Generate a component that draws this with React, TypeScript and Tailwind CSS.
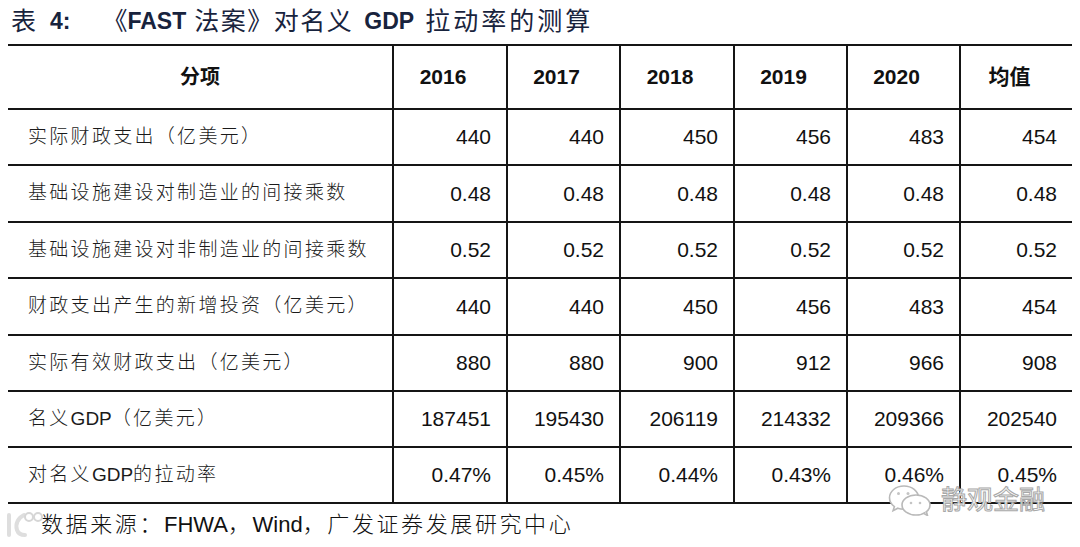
import React from 'react';

const LATIN = '"Liberation Sans", Arial, sans-serif';
const CJK = '"Liberation Sans", "Noto Sans CJK SC", sans-serif';

const COLS = ['2016', '2017', '2018', '2019', '2020', '均值'];

const ROWS: { label: string; values: string[]; h: string }[] = [
  { label: '实际财政支出（亿美元）', values: ['440', '440', '450', '456', '483', '454'], h: 'h-[56px]' },
  { label: '基础设施建设对制造业的间接乘数', values: ['0.48', '0.48', '0.48', '0.48', '0.48', '0.48'], h: 'h-[57px]' },
  { label: '基础设施建设对非制造业的间接乘数', values: ['0.52', '0.52', '0.52', '0.52', '0.52', '0.52'], h: 'h-[56px]' },
  { label: '财政支出产生的新增投资（亿美元）', values: ['440', '440', '450', '456', '483', '454'], h: 'h-[57px]' },
  { label: '实际有效财政支出（亿美元）', values: ['880', '880', '900', '912', '966', '908'], h: 'h-[56px]' },
  { label: '名义GDP（亿美元）', values: ['187451', '195430', '206119', '214332', '209366', '202540'], h: 'h-[56px]' },
  { label: '对名义GDP的拉动率', values: ['0.47%', '0.45%', '0.44%', '0.43%', '0.46%', '0.45%'], h: 'h-[56px]' },
];

// splits a label so only the chinese parts get the wide spacing
function Mixed({ text, cjk }: { text: string; cjk: string }) {
  const parts = text.split(/([\u0000-\u00ff]+)/).filter(Boolean);
  return (
    <>
      {parts.map((p, i) =>
        /^[\u0000-\u00ff]+$/.test(p) ? (
          <span key={i}>{p}</span>
        ) : (
          <span key={i} className={cjk}>
            {p}
          </span>
        )
      )}
    </>
  );
}

const WeChatMark = () => (
  <svg width="46" height="32" viewBox="0 0 46 32" fill="none">
    <path
      d="M17 2C8.7 2 2.5 7.4 2.5 13.8c0 3.6 1.9 6.7 4.9 8.8l-1.3 4 4.7-2.4c1.9.6 4 .9 6.2.9"
      stroke="#b9b9b9"
      strokeWidth="1.6"
      fill="#fff"
    />
    <path d="M17 2c8 0 14.3 5.1 14.5 11.5" stroke="#b9b9b9" strokeWidth="1.6" />
    <ellipse cx="29" cy="21" rx="14" ry="10" fill="#fff" stroke="#b9b9b9" strokeWidth="1.6" />
    <path d="M37 29.5l3.5 2-1-3.6" stroke="#b9b9b9" strokeWidth="1.6" fill="#fff" />
    <circle cx="11.5" cy="9.5" r="1.5" fill="#c4c4c4" />
    <circle cx="21" cy="9.5" r="1.5" fill="#c4c4c4" />
    <circle cx="24" cy="19" r="1.3" fill="#c4c4c4" />
    <circle cx="33" cy="19" r="1.3" fill="#c4c4c4" />
  </svg>
);

const CornerMark = () => (
  <svg width="40" height="30" viewBox="0 0 40 30" fill="none">
    <path d="M4 6v20" stroke="#dedede" strokeWidth="4" strokeLinecap="round" />
    <path d="M19 6c-6 3-9 9-7 15 1 3 4 5 8 5" stroke="#dedede" strokeWidth="4" strokeLinecap="round" />
    <circle cx="24" cy="8" r="4" stroke="#d6d6d6" strokeWidth="2" />
    <circle cx="33" cy="8" r="4" stroke="#d6d6d6" strokeWidth="2" />
  </svg>
);

export default function App() {
  return (
    <div className="relative w-[1080px] h-[547px] overflow-hidden bg-white text-[#111]">
      {/* title */}
      <div
        className="h-[44px] pl-[11px] pt-[5px] flex items-start text-[#18233d] leading-[32px] whitespace-nowrap"
        style={{ fontFamily: CJK }}
      >
        <span className="text-[25px]">表</span>
        <span className="ml-[14px] text-[23px] font-bold" style={{ fontFamily: LATIN }}>4:</span>
        <span className="ml-[32px] text-[25px]">《</span>
        <span className="text-[23px] font-bold" style={{ fontFamily: LATIN }}>FAST</span>
        <span className="ml-[8px] text-[25px] tracking-[1.5px]">法案》对名义</span>
        <span className="ml-[11px] text-[23px] font-bold" style={{ fontFamily: LATIN }}>GDP</span>
        <span className="ml-[11px] text-[25px] tracking-[3px]">拉动率的测算</span>
      </div>

      {/* table */}
      <div
        className="ml-[8px] w-[1064px] grid grid-cols-[384px_114px_113px_114px_113px_113px_113px] border-b-2 border-[#151515]"
        style={{ fontFamily: CJK }}
      >
        <div className="h-[64px] border-t-2 border-[#151515] flex items-center justify-center text-[20px] font-bold">
          分项
        </div>
        {COLS.map((c) => (
          <div
            key={c}
            className="h-[64px] border-t-2 border-l-2 border-[#151515] flex items-center justify-center pr-[14px] text-[21px] font-bold"
          >
            {c}
          </div>
        ))}

        {ROWS.map((r) => (
          <React.Fragment key={r.label}>
            <div
              className={`${r.h} border-t-2 border-[#151515] flex items-center pl-[20px] text-[19px] text-[#1a1a1a] whitespace-nowrap`}
            >
              <Mixed text={r.label} cjk="tracking-[2.3px] font-light" />
            </div>
            {r.values.map((v, i) => (
              <div
                key={i}
                className={`${r.h} border-t-2 border-l-2 border-[#151515] flex items-center justify-end pr-[15px] text-[21px]`}
                style={{ fontFamily: LATIN }}
              >
                {v}
              </div>
            ))}
          </React.Fragment>
        ))}
      </div>

      {/* source */}
      <div
        className="pl-[41px] pt-[8px] text-[22px] leading-[26px] whitespace-nowrap text-[#111]"
        style={{ fontFamily: CJK }}
      >
        <Mixed text="数据来源：FHWA，Wind，广发证券发展研究中心" cjk="tracking-[2.6px] font-light" />
      </div>

      {/* watermarks */}
      <div className="absolute left-[5px] top-[509px]">
        <CornerMark />
      </div>
      <div className="absolute left-[887px] top-[484px] flex items-center gap-[8px]">
        <WeChatMark />
        <span
          className="text-[26px] leading-[28px] text-white [-webkit-text-stroke:1px_#a8a8a8]"
          style={{ fontFamily: CJK }}
        >
          静观金融
        </span>
      </div>
    </div>
  );
}
